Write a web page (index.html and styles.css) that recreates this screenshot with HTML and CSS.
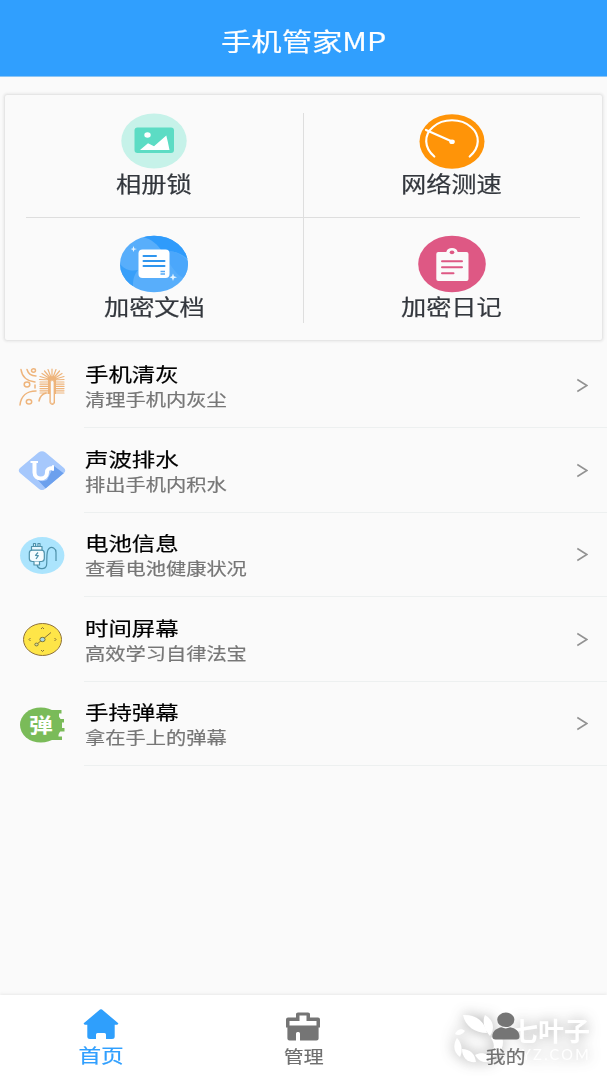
FILE: index.html
```html
<!DOCTYPE html>
<html lang="zh-CN">
<head>
<meta charset="utf-8">
<title>手机管家MP</title>
<link rel="stylesheet" href="styles.css">
</head>
<body>
<div class="app">
  <header class="header"><h1 class="wide">手机管家MP</h1></header>

  <section class="card">
    <div class="tile">
      <svg class="tile-icon" width="68" height="58" viewBox="0 0 68 58">
        <ellipse cx="34" cy="29" rx="32.7" ry="27.5" fill="#c6f2e9"/>
        <rect x="14.5" y="15.5" width="39.5" height="25.5" rx="3" fill="#5cdcc4"/>
        <ellipse cx="27.5" cy="23" rx="3.2" ry="2.7" fill="#fff"/>
        <path d="M20 38 L28 31.3 L34 34.2 L46.3 23.5 Q48 30 49.5 38Z" fill="#fff"/>
      </svg>
      <span class="wide">相册锁</span>
    </div>
    <div class="tile">
      <svg class="tile-icon" width="68" height="58" viewBox="0 0 68 58">
        <ellipse cx="34" cy="29.5" rx="32.5" ry="27.3" fill="#ff9408"/>
        <g fill="none" stroke="#fff" stroke-width="2.2" stroke-linecap="round">
          <path d="M16.3 44.5 C6 36 5.500 23 15 15 C25 6 43 6 53 15 C62.500 23 62 36 51.700 44.500"/>
          <path d="M8 18 L34 29.5"/>
        </g>
        <ellipse cx="34" cy="29.7" rx="2.8" ry="2.3" fill="#fff"/>
      </svg>
      <span class="wide">网络测速</span>
    </div>
    <div class="tile">
      <svg class="tile-icon" width="68" height="58" viewBox="0 0 68 58">
        <clipPath id="doc-disc"><ellipse cx="34" cy="29" rx="34" ry="28.3"/></clipPath>
        <g clip-path="url(#doc-disc)">
          <rect width="68" height="58" fill="#58aefb"/>
          <path d="M23 0 H68 V24 C58 16 50 15 43 18 C38 9 31 4 23 2Z" fill="#2f9bfb"/>
          <path d="M0 29 C6 36 12 36 18 35 C13 41 12 48 14 58 H0Z" fill="#389ff9"/>
          <path d="M43 17 C51 14 60 18 68 26 V43 C60 45 52 34 43 17Z" fill="#4ba7fb"/>
        </g>
        <rect x="18.500" y="14.500" width="31" height="28.500" rx="4" fill="#fff"/>
        <g stroke="#2f96ef" stroke-width="2" stroke-linecap="round"><path d="M23.500 21H36M23.500 26H44.500M23.500 31H44.500"/></g>
        <path d="M40.500 36.500H45M40.500 39H45" stroke="#54a9f5" stroke-width="1.700"/>
        <path d="M13.500 11 L14.400 13.400 L17 14 L14.400 14.700 L13.500 17 L12.600 14.700 L10.500 14 L12.600 13.400Z M53 38.500 L54 41.300 L57 42.300 L54 43.200 L53 46 L52 43.200 L49.500 42.300 L52 41.300Z" fill="#e4f4ff"/>
      </svg>
      <span class="wide">加密文档</span>
    </div>
    <div class="tile">
      <svg class="tile-icon" width="68" height="58" viewBox="0 0 68 58">
        <ellipse cx="34" cy="29" rx="33.800" ry="28.300" fill="#de5884"/>
        <rect x="18.300" y="17" width="32.200" height="29" rx="2" fill="#fafafa"/>
        <path d="M28.500 20 V16.500 C29 14.500 31 13 34 13 C37 13 39 14.500 39.500 16.500 V20Z" fill="#fafafa"/>
        <ellipse cx="34" cy="17.300" rx="2.300" ry="1.900" fill="#de5884"/>
        <path d="M24 26.300H44M24 32.200H44M24 38.200H35.500" stroke="#de5884" stroke-width="2" stroke-linecap="round"/>
      </svg>
      <span class="wide">加密日记</span>
    </div>
  </section>

  <main class="list">
    <div class="row">
      <svg class="row-icon" width="48" height="42" viewBox="0 0 48 42" fill="none" stroke="#eeb47b" stroke-width="1.500" stroke-linecap="round">
        <path d="M3 3.500 C4 11 9 15 17 16M9 3.500 C10 7 13 10 18 10M2 39 C3 30 9 25 18 25M21 35 C22 30 24 28 28 27M17 19 V22"/>
        <ellipse cx="15.500" cy="4.500" rx="2" ry="1.700"/><ellipse cx="9" cy="18.500" rx="2.800" ry="2.400"/><ellipse cx="11" cy="35.800" rx="2.700" ry="2.300"/>
        <path stroke-width="1.200" d="M34 14V3M34 14L30 3.500M34 14L38 3.500M34 14L26.500 5M34 14L41.500 5M34 14L24 7.500M34 14L44 7.500M34 14L22 10.500M34 14L46 10.500M34 14L21.500 13.500M34 14L46 13.500M22 16H31M37 16H46M22 18.200H31M37 18.200H46M22 20.400H31M37 20.400H46M22 22.600H31M37 22.600H46M22 24.800H31M37 24.800H46M22 27H31M37 27H46"/>
        <path d="M30 13 Q34 8 38 13V28H37V37Q34.500 41 31.500 37V28H30Z" fill="#eeb47b" stroke="none"/>
        <path d="M32.500 15.500 Q34.200 13 36 15.500V36.500Q34.200 39 32.500 36.500Z" fill="#fafafa" stroke-width=".800"/>
      </svg>
      <div class="row-body"><div class="copy"><h2 class="wide">手机清灰</h2><p class="wide">清理手机内灰尘</p></div>
      <svg class="chevron" width="12" height="15" viewBox="0 0 12 15"><path d="M1.300 1.500L10.800 7.500L1.300 13.500"/></svg></div>
    </div>
    <div class="row">
      <svg class="row-icon" width="48" height="42" viewBox="0 0 48 42">
        <clipPath id="drain-diamond"><path d="M20.500 2.500 Q24 0 27.500 2.500 L46 18 Q48.500 20.500 46 23 L27.500 38.500 Q24 41.500 20.500 38.500 L2 23 Q-.500 20.500 2 18Z"/></clipPath>
        <g clip-path="url(#drain-diamond)"><rect width="48" height="42" fill="#a6c8fc"/><path d="M18 28 Q23 33 29 30 L36 16 L52 28 V42 H31Z" fill="#6ca0ed"/></g>
        <path d="M16.500 12 V22.500 C16.500 30.500 29 30.500 29 22.500 C29 19 30.500 18 35 18" fill="none" stroke="#fff" stroke-width="4"/>
        <path d="M12.500 12H20M35 15.300V20.700" stroke="#fff" stroke-width="2"/>
      </svg>
      <div class="row-body"><div class="copy"><h2 class="wide">声波排水</h2><p class="wide">排出手机内积水</p></div>
      <svg class="chevron" width="12" height="15" viewBox="0 0 12 15"><path d="M1.300 1.500L10.800 7.500L1.300 13.500"/></svg></div>
    </div>
    <div class="row">
      <svg class="row-icon" width="48" height="42" viewBox="0 0 48 42">
        <ellipse cx="24.200" cy="20.500" rx="22.200" ry="18.500" fill="#abe4fd"/>
        <g fill="none" stroke="#4e91aa" stroke-width="1.200" stroke-linejoin="round">
          <path d="M19 30 C20 34.500 27 35 28.500 30.500 C29.500 25.500 27.500 16.500 31 13.500 C34 11 38 13.500 38 17.500 V26"/>
          <path d="M15.500 11.500V8.500H17.500V11.500M20 11.500V8.500H22V11.500" fill="#edfaff"/>
          <rect x="13.500" y="11.500" width="10.500" height="4" fill="#e9f8ff"/>
          <rect x="11.300" y="15.200" width="15" height="11.300" rx="3" fill="#f5fcff"/>
          <path d="M16 26.500V30H21.500V26.500" fill="#f5fcff"/>
          <path d="M20 17.500L17.500 20.300L20.300 20.700L18 24"/>
        </g>
      </svg>
      <div class="row-body"><div class="copy"><h2 class="wide">电池信息</h2><p class="wide">查看电池健康状况</p></div>
      <svg class="chevron" width="12" height="15" viewBox="0 0 12 15"><path d="M1.300 1.500L10.800 7.500L1.300 13.500"/></svg></div>
    </div>
    <div class="row">
      <svg class="row-icon" width="48" height="42" viewBox="0 0 48 42">
        <ellipse cx="24.500" cy="20.500" rx="19" ry="16" fill="#fee548" stroke="#8e713b"/>
        <g fill="none" stroke="#86703a" stroke-width="1"><path d="M23 10L24.500 8.500L26 10M23 31L24.500 32.500L26 31M12.500 19L11 20.500L12.500 22M36.500 19L38 20.500L36.500 22M18.500 25.500L33 13.500"/></g>
        <ellipse cx="24.500" cy="20.500" rx="2.600" ry="2.200" fill="#aad9e5" stroke="#78743d"/>
        <ellipse cx="18.500" cy="25.500" rx="1.700" ry="1.400" fill="#d8dc96" stroke="#78743d"/>
      </svg>
      <div class="row-body"><div class="copy"><h2 class="wide">时间屏幕</h2><p class="wide">高效学习自律法宝</p></div>
      <svg class="chevron" width="12" height="15" viewBox="0 0 12 15"><path d="M1.300 1.500L10.800 7.500L1.300 13.500"/></svg></div>
    </div>
    <div class="row">
      <svg class="row-icon" width="48" height="42" viewBox="0 0 48 42">
        <path d="M30 6H43.500V9.500H41V15H46V18.500H44V24H46.500V27.500H40.500V32.500H44V36H28Z" fill="#7abb59"/>
        <ellipse cx="22.800" cy="21" rx="20.800" ry="17.600" fill="#7abb59"/>
        <text class="badge-text" transform="translate(23 29) scale(1.160 1)" text-anchor="middle">弹</text>
      </svg>
      <div class="row-body"><div class="copy"><h2 class="wide">手持弹幕</h2><p class="wide">拿在手上的弹幕</p></div>
      <svg class="chevron" width="12" height="15" viewBox="0 0 12 15"><path d="M1.300 1.500L10.800 7.500L1.300 13.500"/></svg></div>
    </div>
  </main>

  <nav class="tabs">
    <div class="tab active">
      <svg width="36" height="31" viewBox="0 0 36 31"><path d="M17 .600 Q18 -.300 19 .600 L35 14 Q36 15.500 34 15.800 H31.700 V27.500 Q31.700 30 29 30 H23 V25.500 Q23 24 21.500 24 H14.500 Q13 24 13 25.500 V30 H7 Q4.300 30 4.300 27.500 V15.800 H2 Q0 15.500 1 14Z" fill="#2f9ffc"/></svg>
      <span class="wide">首页</span>
    </div>
    <div class="tab">
      <svg width="36" height="32" viewBox="0 0 36 32"><path transform="translate(0 .500)" fill-rule="evenodd" fill="#757575" d="M11 6 V4.500 Q11 3 13 3 H23 Q25 3 25 4.500 V8 H33 Q35 8 35 10 V18 H33.600 V29 Q33.600 31 31.500 31 H15 V24 Q15 22.500 13.500 22.500 H12.500 Q11 22.500 11 24 V31 H4.500 Q2.400 31 2.400 29 V18 H1 V10 Q1 8 3 8 H11Z M14.500 6 V11.500 H4.500 V16 H31.500 V11.500 H21.500 V6Z"/></svg>
      <span class="wide">管理</span>
    </div>
    <div class="tab">
      <svg width="36" height="32" viewBox="0 0 36 32"><g transform="translate(-.500 .500)" fill="#757575"><ellipse cx="18.300" cy="10.300" rx="8.600" ry="7.300"/><path d="M4.800 27 C5 21 10 18.500 14 17.800 Q18.300 20 22.500 17.800 C28 18.500 32 22 32 27 Q32 30 29 30 H8 Q4.800 30 4.800 27Z"/></g></svg>
      <span class="wide">我的</span>
    </div>
    <div class="watermark">
      <svg width="52" height="54" viewBox="0 0 52 54" fill="#fff">
        <path d="M9 2 C21 1 31 8 33 20 C21 20 11 13 9 2Z"/>
        <path d="M31 2 C40 7 41 16 36 23 C30 17 28 8 31 2Z"/>
        <path d="M1 21 C3 16 8 15 11 18 C8 22 4 23 1 21Z"/>
        <path d="M3 25 C8 30 9 38 6 44 C-1 39 -1 31 3 25Z"/>
        <path d="M8 36 C16 36 21 41 22 49 C14 50 8 45 8 36Z"/>
        <path d="M21 42 C28 38 35 41 38 47 C31 51 25 49 21 42Z"/>
        <path d="M37 25 C43 20 49 22 49 29 C49 38 43 44 34 44 C40 37 42 33 37 25Z"/>
      </svg>
      <div class="mark-copy"><b>七叶子</b><span>YZ.COM</span></div>
    </div>
  </nav>
</div>
</body>
</html>
```
FILE: styles.css
```css
* { box-sizing: border-box; }
body, h1, h2, p { margin: 0; font-weight: 400; }
body { background: #fafafa; font-family: "Noto Sans CJK SC", sans-serif; color: #000; overflow: hidden; }
.app { width: 607px; height: 1080px; display: flex; flex-direction: column; }
/* Text is set slightly extended throughout the interface. */
.wide { display: block; white-space: nowrap; transform: scaleX(1.19); -webkit-text-stroke: .2px currentColor; }
.header { height: 77px; flex: none; background: #309ffe; border-bottom: 1px solid #8bc5f5; display: flex; align-items: center; justify-content: center; padding-top: 3px; }
.header h1 { color: #fff; font-size: 25.200px; line-height: 36px; transform: scaleX(1.205); }
.card { margin: 18px 5px 0; height: 245px; flex: none; display: grid; grid-template-columns: 298px 1fr; grid-template-rows: 122.500px 1fr;
  border-radius: 2px; box-shadow: 0 0 3px 1px #dcdcdc;
  background: linear-gradient(#dedede, #dedede) 298px 18px / 1px 210px no-repeat, linear-gradient(#dedede, #dedede) 21px 122px / 554px 1px no-repeat, #fafafa; }
.tile { display: flex; flex-direction: column; align-items: center; padding-top: 17px; color: #33373d; }
.tile:nth-child(even) { padding-right: 2px; }
.tile:nth-child(n+3) { padding-top: 17.500px; }
.tile-icon { flex: none; }
.tile .wide { font-size: 21.200px; line-height: 30px; margin-top: -2px; }
.list { flex: 1; padding-top: 3.500px; }
.row { height: 84.500px; display: flex; padding-left: 18px; }
.row-icon { flex: none; margin-top: 22px; }
.row-body { flex: 1; margin-left: 18px; display: flex; justify-content: space-between; align-items: center; border-bottom: 1px solid #edf0f0; padding-right: 19px; }
.copy { padding: 2px 0 0 .500px; }
.copy .wide { transform-origin: left; }
.copy h2 { font-size: 19.700px; line-height: 26px; }
.copy p { font-size: 17px; line-height: 24px; color: #767676; }
.chevron { fill: none; stroke: #929292; stroke-width: 1.500; margin-top: 1px; }
.badge-text { font: 700 20.500px "Noto Sans CJK SC", sans-serif; fill: #fff; }
.tabs { position: relative; height: 85px; flex: none; display: grid; grid-template-columns: repeat(3, 1fr); background: #fff; box-shadow: 0 -1px 3px #e9e9e9; }
.tab { display: flex; flex-direction: column; align-items: center; padding-top: 14px; color: #707070; }
.tab svg { flex: none; }
.tab .wide { font-size: 16.700px; line-height: 24px; margin-top: 3px; }
.tab.active { color: #309ffe; }
.tab.active .wide { font-size: 19px; margin-top: 3px; }
.watermark { position: absolute; left: 454px; top: 18px; width: 142px; height: 60px; display: flex; gap: 6px; color: #fff; opacity: .850; filter: drop-shadow(0 0 7px #999); }
.watermark svg { flex: none; }
.mark-copy { display: flex; flex-direction: column; width: 79px; padding-top: 3px; }
.mark-copy b { font-size: 26px; line-height: 27px; font-weight: 700; white-space: nowrap; }
.mark-copy span { font: 14.500px/18px Lato, sans-serif; letter-spacing: 2.300px; margin-top: 3px; align-self: flex-end; white-space: nowrap; }
.tab:nth-child(3) .wide, .tab:nth-child(3) svg { position: relative; z-index: 1; }
```
